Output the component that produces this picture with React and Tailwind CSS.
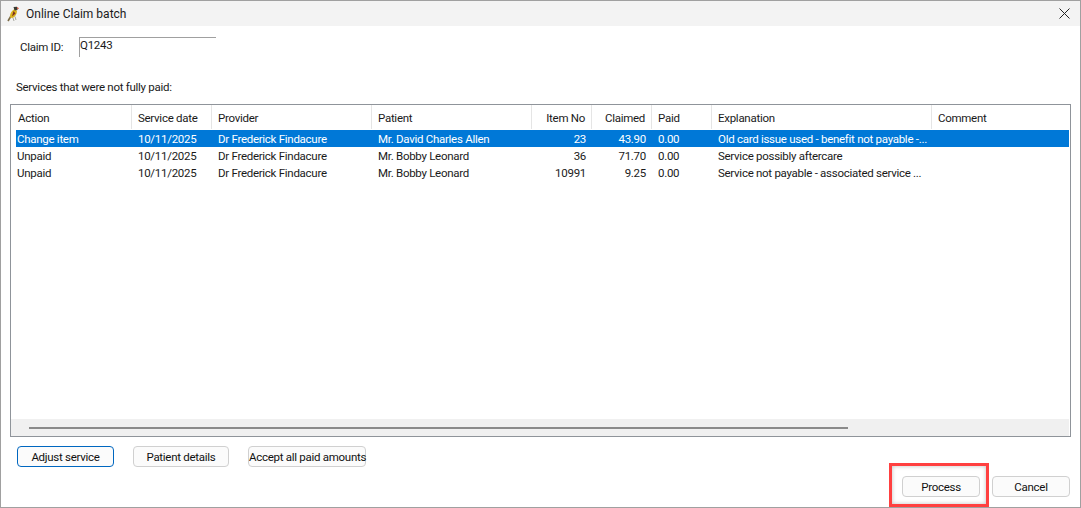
const cols = [
  { t: "Action", w: "w-[120px]" },
  { t: "Service date", w: "w-[80px]" },
  { t: "Provider", w: "w-[160px]" },
  { t: "Patient", w: "w-[160px]" },
  { t: "Item No", w: "w-[60px]", r: true },
  { t: "Claimed", w: "w-[60px]", r: true },
  { t: "Paid", w: "w-[60px]" },
  { t: "Explanation", w: "w-[220px]" },
  { t: "Comment", w: "w-[130px]" },
];
const rows = [
  ["Change item", "10/11/2025", "Dr Frederick Findacure", "Mr. David Charles Allen", "23", "43.90", "0.00", "Old card issue used - benefit not payable -...", ""],
  ["Unpaid", "10/11/2025", "Dr Frederick Findacure", "Mr. Bobby Leonard", "36", "71.70", "0.00", "Service possibly aftercare", ""],
  ["Unpaid", "10/11/2025", "Dr Frederick Findacure", "Mr. Bobby Leonard", "10991", "9.25", "0.00", "Service not payable - associated service ...", ""],
];

function Bird() {
  return (
    <svg width="14" height="16" viewBox="0 0 14 16" className="mr-[5px] mt-[1px]">
      <path d="M1 15 L4 10" stroke="#7a6a45" strokeWidth="1.6" fill="none" />
      <path d="M3 11.5 C2.5 8 5 4 8 3 L10 5 C10 8 8 11 5.5 12 Z" fill="#d9b21f" />
      <path d="M6.5 1 L10 0.8 L10.5 4 L7.5 4.5 Z" fill="#3a3a32" />
      <path d="M10 1 L12 2.2 L10.4 3.4 Z" fill="#d8452a" />
      <path d="M6.5 5 L8.5 7.5 L5 10.5 Z" fill="#7c2f22" />
      <path d="M6 12 L7 15 M8 10.5 L9 14" stroke="#a8a8a0" strokeWidth="1" fill="none" />
    </svg>
  );
}

function Btn({ children, w, focus }) {
  return (
    <button className={`h-[21px] rounded-[4px] border bg-[#fbfbfb] text-[#111] leading-none whitespace-nowrap pt-[2px] ${w} ${focus ? "border-[#0067c0]" : "border-[#d0d0d0]"}`}>
      {children}
    </button>
  );
}

export default function App() {
  return (
    <div className="relative w-[1081px] h-[508px] overflow-hidden border border-[#a0a0a0] bg-white text-[11.5px] tracking-[-0.28px] text-[#1a1a1a] font-['Roboto','Liberation_Sans',sans-serif]">
      <div className="flex items-center h-[25px] bg-[#f3f3f3] pl-[6px] pr-[10px]">
        <Bird />
        <span className="text-[12px] tracking-normal">Online Claim batch</span>
        <svg width="11" height="11" viewBox="0 0 11 11" className="ml-auto">
          <path d="M0.5 0.5 L10.5 10.5 M10.5 0.5 L0.5 10.5" stroke="#222" strokeWidth="1" fill="none" />
        </svg>
      </div>
      <div className="flex pl-[19px] pt-[11px]">
        <span className="w-[59px] pt-[2px]">Claim ID:</span>
        <div className="w-[137px] h-[20px] border-t border-l border-[#a0a0a0] leading-[14px]">Q1243</div>
      </div>
      <div className="pl-[15px] pt-[22px] h-[47px] leading-[16px]">Services that were not fully paid:</div>
      <div className="mx-[9px] h-[333px] border border-[#8f949a] flex flex-col">
        <div className="flex h-[25px] shrink-0 pl-px">
          {cols.map((c, i) => (
            <div key={i} className={`${c.w} shrink-0 h-[24px] px-[6px] pt-[3px] flex items-center border-r border-[#e5e5e5] last:border-r-0 ${c.r ? "justify-end" : ""}`}>
              {c.t}
            </div>
          ))}
        </div>
        <div className="flex-1 pl-[5px] pr-px">
          {rows.map((r, i) => (
            <div key={i} className={`flex h-[17px] pt-[2px] items-center whitespace-nowrap ${i === 0 ? "bg-[#0078d7] text-white" : ""}`}>
              {r.map((v, j) => {
                const w = j === 0 ? "w-[116px] pl-[1px]" : cols[j].w + " px-[6px]";
                return (
                  <div key={j} className={`${w} shrink-0 ${cols[j].r ? "text-right" : ""}`}>{v}</div>
                );
              })}
            </div>
          ))}
        </div>
        <div className="h-[17px] mr-[1px] bg-[#f0f0f0] flex items-center pl-[18px]">
          <div className="w-[819px] h-[2px] bg-[#8a8a8a]" />
        </div>
      </div>
      <div className="flex gap-[19px] pl-[16px] pt-[9px]">
        <Btn w="w-[97px]" focus>Adjust service</Btn>
        <Btn w="w-[96px]">Patient details</Btn>
        <Btn w="w-[118px]">Accept all paid amounts</Btn>
      </div>
      <div className="flex justify-end gap-[12px] pr-[10px] pt-[9px]">
        <Btn w="w-[78px]">Process</Btn>
        <Btn w="w-[78px]">Cancel</Btn>
      </div>
      <div className="absolute left-[888px] top-[462px] w-[100px] h-[44px] border-[3px] border-[#ff4040] shadow-[inset_0_0_4px_rgba(0,0,0,0.25)]" />
    </div>
  );
}
